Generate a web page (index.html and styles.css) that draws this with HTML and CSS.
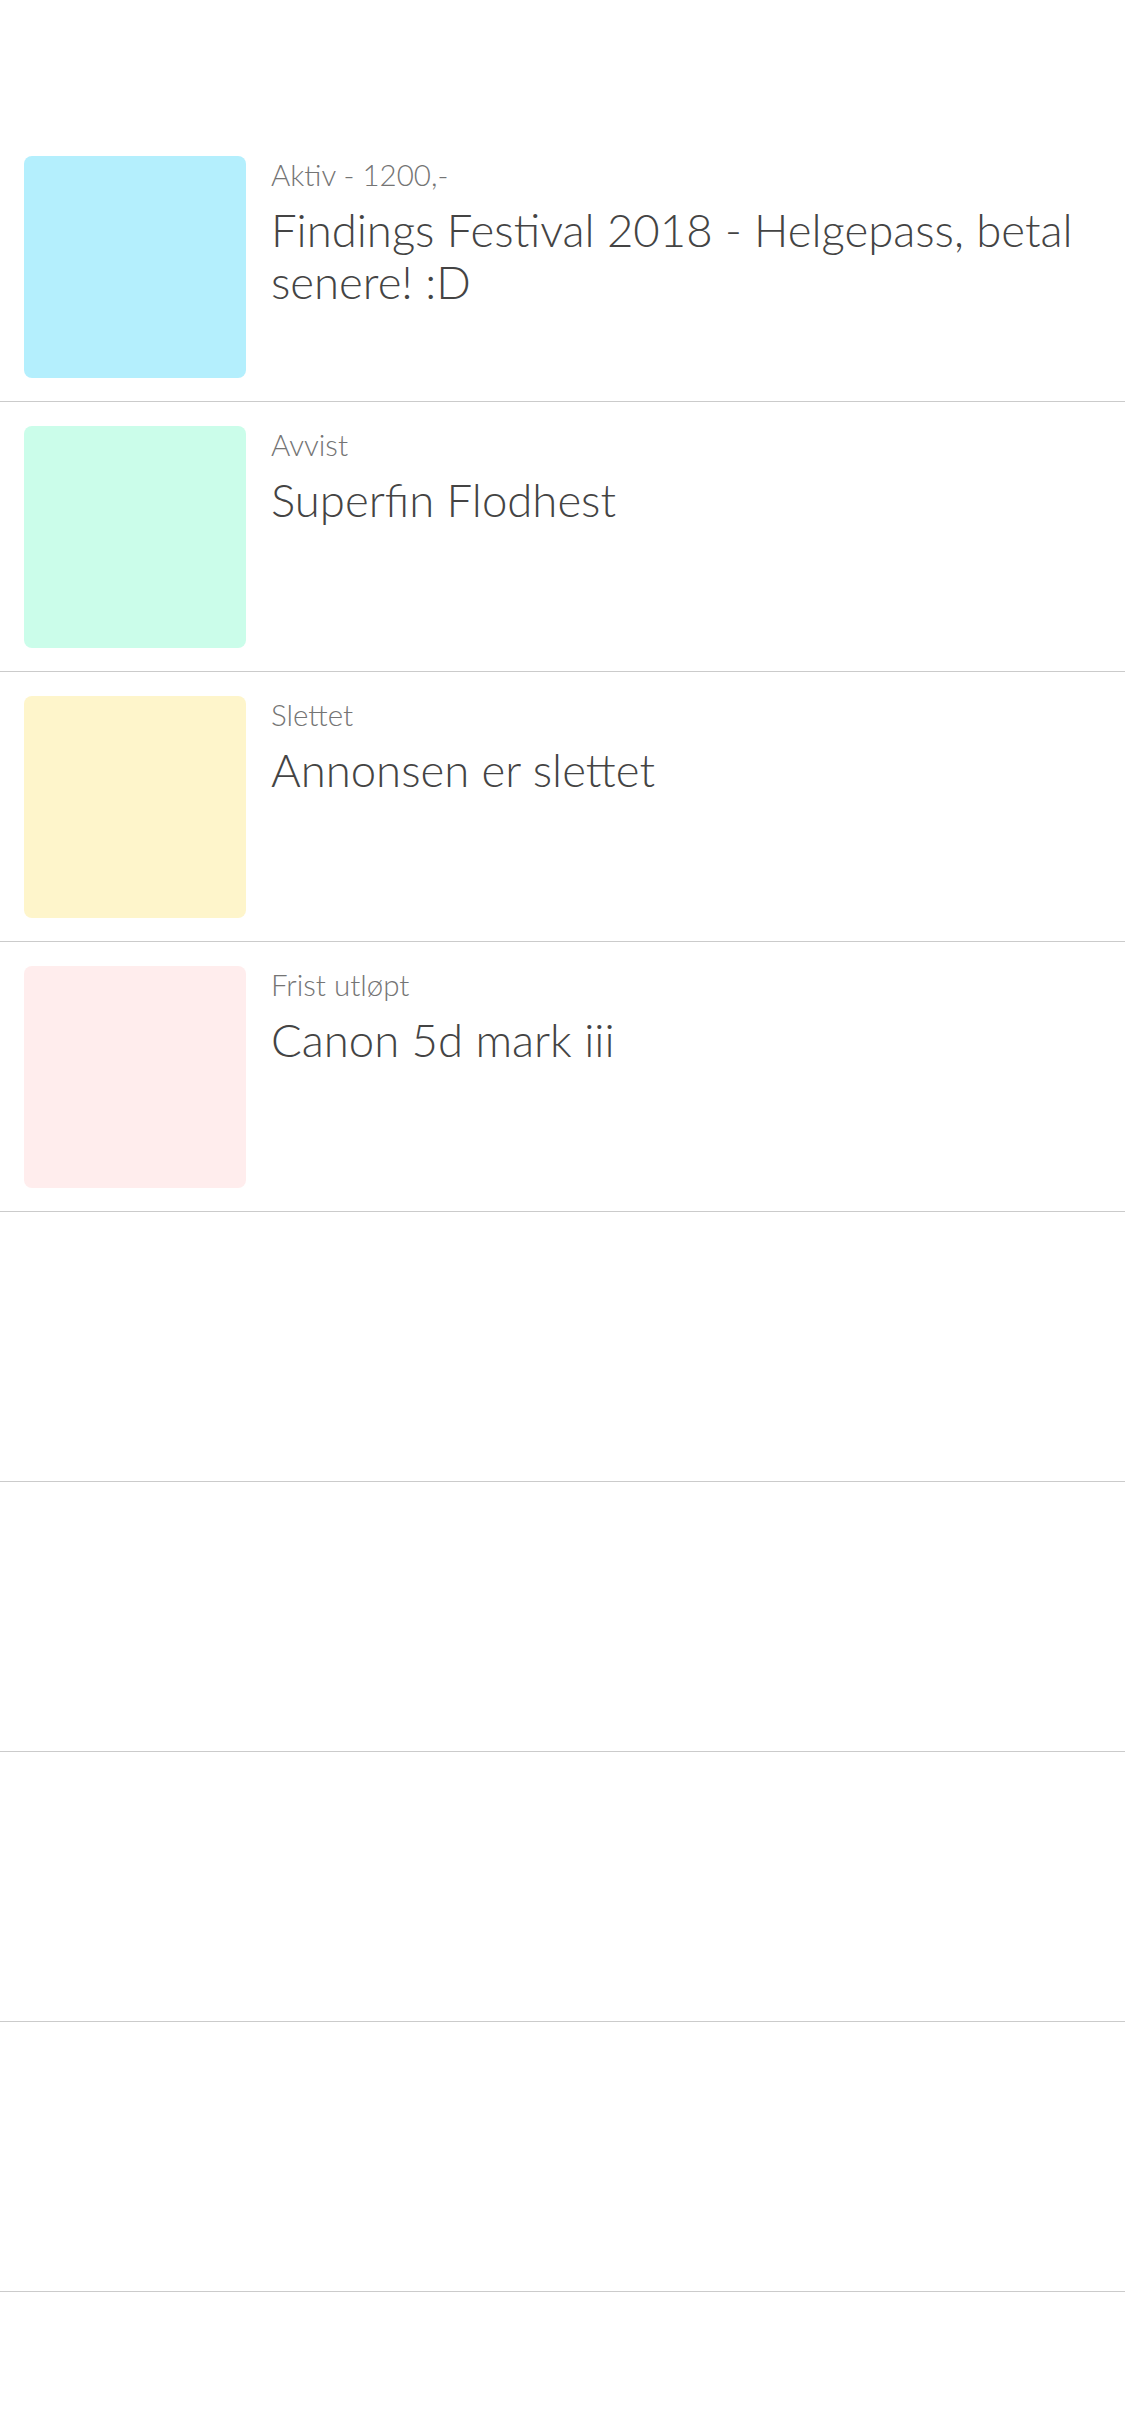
FILE: index.html
```html
<!DOCTYPE html>
<html lang="no">
<head>
<meta charset="utf-8">
<title>Mine annonser</title>
<link rel="stylesheet" href="styles.css">
</head>
<body>
<main class="list">
  <div class="row">
    <div class="thumb thumb-blue"></div>
    <div class="info">
      <div class="status">Aktiv - 1200,-</div>
      <div class="title">Findings Festival 2018 - Helgepass, betal senere! :D</div>
    </div>
  </div>
  <div class="row">
    <div class="thumb thumb-mint"></div>
    <div class="info">
      <div class="status">Avvist</div>
      <div class="title">Superfin Flodhest</div>
    </div>
  </div>
  <div class="row">
    <div class="thumb thumb-yellow"></div>
    <div class="info">
      <div class="status">Slettet</div>
      <div class="title">Annonsen er slettet</div>
    </div>
  </div>
  <div class="row">
    <div class="thumb thumb-pink"></div>
    <div class="info">
      <div class="status">Frist utløpt</div>
      <div class="title">Canon 5d mark iii</div>
    </div>
  </div>
  <div class="row row-empty"></div>
  <div class="row row-empty"></div>
  <div class="row row-empty"></div>
  <div class="row row-empty"></div>
</main>
</body>
</html>
```
FILE: styles.css
```css
html, body {
  margin: 0;
  padding: 0;
  background: #ffffff;
}
body {
  font-family: "Lato", "Liberation Sans", sans-serif;
  -webkit-font-smoothing: antialiased;
}
.list {
  padding-top: 132px;
  display: flex;
  flex-direction: column;
}
.row {
  display: flex;
  align-items: flex-start;
  gap: 25px;
  padding: 24px 0 23px 24px;
  border-bottom: 1px solid #cbcbcb;
  box-sizing: border-box;
  height: 270px;
}
.thumb {
  flex: 0 0 222px;
  width: 222px;
  height: 222px;
  border-radius: 8px;
}
.thumb-blue { background: #b4effd; }
.thumb-mint { background: #cbfdea; }
.thumb-yellow { background: #fef5cb; }
.thumb-pink { background: #ffeded; }
.info {
  flex: 1;
  padding-right: 10px;
  min-width: 0;
}
.status {
  font-size: 29.5px;
  line-height: 34px;
  font-weight: 300;
  color: #747474;
  margin-top: 2px;
}
.title {
  font-size: 45.5px;
  line-height: 52px;
  font-weight: 300;
  color: #444444;
  margin-top: 12px;
}
```
